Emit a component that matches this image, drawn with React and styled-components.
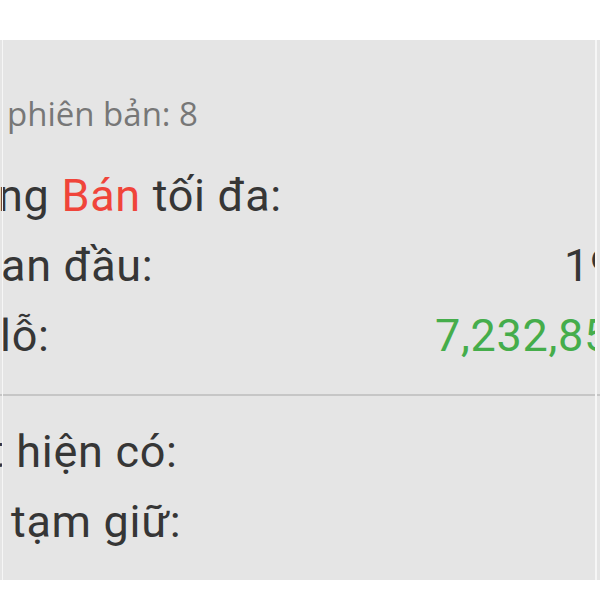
import React from 'react';
import styled, { createGlobalStyle } from 'styled-components';

const GlobalStyle = createGlobalStyle`
  html, body {
    margin: 0;
    padding: 0;
    background: #ffffff;
  }
  body {
    font-family: Roboto, 'Liberation Sans', sans-serif;
    overflow: hidden;
  }
`;

const Page = styled.div`
  width: 600px;
  height: 600px;
  padding-top: 40px;
  box-sizing: border-box;
  background: #ffffff;
`;

const Panel = styled.section`
  position: relative;
  width: 600px;
  height: 540px;
  box-sizing: border-box;
  padding-top: 52px;
  background: #e5e5e5;
  overflow: hidden;

  &::before,
  &::after {
    content: '';
    position: absolute;
    top: 0;
    bottom: 0;
    background: #f6f6f6;
  }
  &::before {
    left: 2px;
    width: 1px;
  }
  &::after {
    left: 595px;
    width: 2px;
  }
`;

const Version = styled.div`
  padding-left: 7px;
  height: 44px;
  line-height: 44px;
  font-family: 'Open Sans', 'Noto Sans', sans-serif;
  font-size: 33px;
  color: #777777;
  white-space: nowrap;
  margin-bottom: 25px;
`;

const Group = styled.div`
  display: flex;
  flex-direction: column;
`;

const Row = styled.div`
  display: flex;
  align-items: center;
  width: 595px;
  height: 70px;
  line-height: 70px;
  font-size: 45px;
  letter-spacing: 0.7px;
  color: #363636;
  white-space: nowrap;
`;

const Label = styled.span`
  flex: 1;
  min-width: 0;
  overflow: hidden;
  text-indent: ${p => p.$indent || 0}px;
`;

const Accent = styled.span`
  color: #f0443a;
`;

const Value = styled.span`
  flex: 0 0 auto;
  width: ${p => p.$width}px;
  overflow: hidden;
  color: ${p => (p.$tone === 'up' ? '#45ad4b' : '#363636')};
`;

const Divider = styled.hr`
  margin: 23px 0 21px;
  border: none;
  height: 2px;
  background: #c6c6c6;
`;

function App() {
  return (
    <Page>
      <GlobalStyle />
      <Panel>
        <Version>phiên bản: 8</Version>
        <Group>
          <Row>
            <Label $indent={-2}>
              ng <Accent>Bán</Accent> tối đa:
            </Label>
          </Row>
          <Row>
            <Label $indent={1}>an đầu:</Label>
            <Value $width={31}>19,850,000</Value>
          </Row>
          <Row>
            <Label>lỗ:</Label>
            <Value $width={160} $tone="up">7,232,850</Value>
          </Row>
        </Group>
        <Divider />
        <Group>
          <Row>
            <Label $indent={-11}>t hiện có:</Label>
          </Row>
          <Row>
            <Label $indent={11}>tạm giữ:</Label>
          </Row>
        </Group>
      </Panel>
    </Page>
  );
}

export default App;
